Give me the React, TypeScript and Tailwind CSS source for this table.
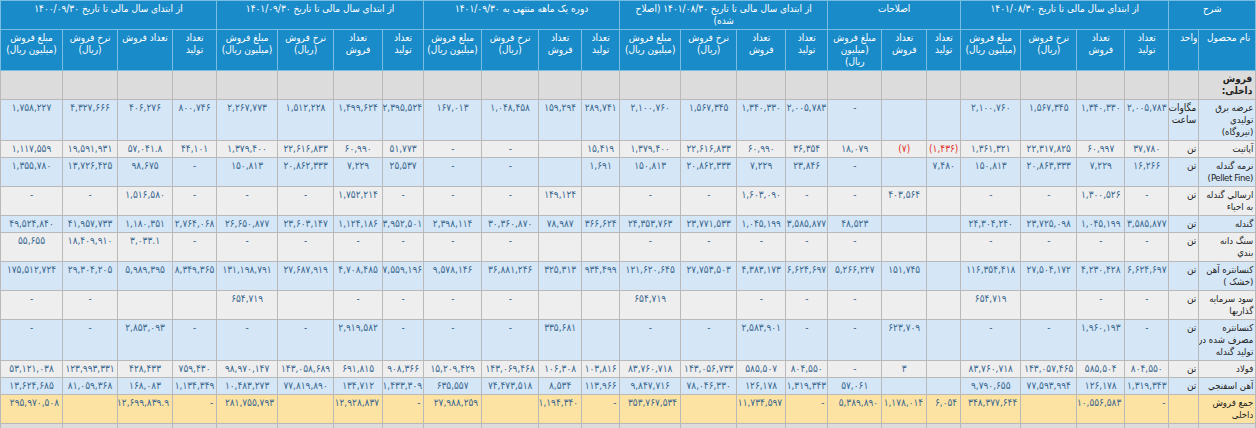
import React from 'react';

const fa = (s: string) => s.replace(/[0-9]/g, (d) => '۰۱۲۳۴۵۶۷۸۹'[Number(d)]);

type Tone = 'blue' | 'gray' | 'yellow' | 'section';

type Row = {
  name: string[];
  unit: string[];
  tone: Tone;
  cells: string[];
};

const toneBg: Record<Tone, string> = {
  blue: 'bg-[#d5e6f6]',
  gray: 'bg-[#eeeeee]',
  yellow: 'bg-[#fde3a3]',
  section: 'bg-[#dcdcdc]',
};

const rows: Row[] = [
  {
    name: ['عرضه برق', 'تولیدی', '(نیروگاه)'],
    unit: ['مگاوات', 'ساعت'],
    tone: 'blue',
    cells: ['2,005,783', '1,340,330', '1,567,345', '2,100,760', '', '', '-', '2,005,783', '1,340,330', '1,567,345', '2,100,760', '289,741', '159,294', '1,048,458', '167,013', '2,395,524', '1,499,624', '1,512,228', '2,267,773', '800,746', '406,276', '4,327,666', '1,758,227'],
  },
  {
    name: ['آپاتیت'],
    unit: ['تن'],
    tone: 'gray',
    cells: ['37,780', '60,997', '22,317,825', '1,361,321', '(1,436)', '(7)', '18,079', '36,354', '60,990', '22,616,833', '1,379,400', '15,419', '', '-', '-', '51,773', '60,990', '22,616,833', '1,379,400', '44,101', '57,041.8', '19,591,931', '1,117,559'],
  },
  {
    name: ['نرمه گندله', '(Pellet Fine)'],
    unit: ['تن'],
    tone: 'blue',
    cells: ['16,266', '7,229', '20,863,333', '150,813', '7,480', '', '-', '23,846', '7,229', '20,862,333', '150,813', '1,691', '', '-', '-', '25,537', '7,229', '20,862,333', '150,813', '-', '98,675', '13,726,425', '1,355,780'],
  },
  {
    name: ['ارسالي گندله', 'به احیاء'],
    unit: ['تن'],
    tone: 'gray',
    cells: ['-', '1,300,526', '-', '-', '', '403,564', '-', '-', '1,603,090', '-', '-', '', '149,124', '-', '-', '-', '1,752,214', '-', '-', '-', '1,516,580', '-', '-'],
  },
  {
    name: ['گندله'],
    unit: ['تن'],
    tone: 'blue',
    cells: ['3,585,877', '1,045,199', '23,725,098', '24,304,240', '', '', '48,523', '3,585,877', '1,045,199', '23,771,533', '24,353,763', '366,624', '78,987', '30,360,870', '2,398,114', '3,952,501', '1,124,186', '23,603,147', '26,650,877', '2,764,068', '1,180,351', '41,957,733', '49,524,840'],
  },
  {
    name: ['سنگ دانه', 'بندي'],
    unit: ['تن'],
    tone: 'gray',
    cells: ['-', '-', '-', '-', '', '', '-', '-', '-', '-', '-', '', '', '-', '-', '-', '-', '-', '-', '-', '3,033.1', '18,409,910', '55,655'],
  },
  {
    name: ['کنسانتره آهن', '(خشک )'],
    unit: ['تن'],
    tone: 'blue',
    cells: ['6,624,697', '4,230,428', '27,504,172', '116,354,418', '', '151,745', '5,266,227', '6,624,697', '4,383,173', '27,753,503', '121,620,645', '934,499', '325,313', '36,881,246', '9,578,146', '7,559,196', '4,708,485', '27,687,919', '131,198,791', '8,349,365', '5,989,395', '29,304,205', '175,512,724'],
  },
  {
    name: ['سود سرمایه', 'گذاریها'],
    unit: ['تن'],
    tone: 'gray',
    cells: ['-', '-', '', '654,719', '', '', '-', '-', '-', '', '654,719', '', '', '-', '-', '-', '-', '', '654,719', '', '', '-', '-'],
  },
  {
    name: ['کنسانتره', 'مصرف شده در', 'تولید گندله'],
    unit: ['تن'],
    tone: 'blue',
    cells: ['-', '1,960,193', '-', '-', '', '623,709', '-', '-', '2,583,901', '-', '-', '', '335,681', '-', '-', '-', '2,919,582', '-', '-', '-', '2,853,093', '-', '-'],
  },
  {
    name: ['فولاد'],
    unit: ['تن'],
    tone: 'gray',
    cells: ['804,550', '585,504', '143,057,465', '83,760,718', '', '3', '-', '804,550', '585,507', '143,056,733', '83,760,718', '103,816', '106,308', '143,069,468', '15,209,429', '908,366', '691,815', '143,058,689', '98,970,147', '759,430', '428,433', '123,993,331', '53,121,038'],
  },
  {
    name: ['آهن اسفنجي'],
    unit: ['تن'],
    tone: 'blue',
    cells: ['1,319,343', '126,178', '77,593,994', '9,790,655', '', '', '57,061', '1,319,343', '126,178', '78,046,330', '9,847,716', '113,966', '8,534', '74,473,518', '635,557', '1,433,309', '134,712', '77,819,890', '10,483,273', '1,134,349', '168,083', '81,059,368', '13,624,685'],
  },
  {
    name: ['جمع فروش', 'داخلی'],
    unit: [],
    tone: 'yellow',
    cells: ['-', '10,556,583', '', '348,377,644', '6,054', '1,178,014', '5,389,890', '-', '11,734,597', '', '353,767,534', '-', '1,194,340', '', '27,988,259', '-', '12,928,837', '', '281,755,793', '-', '12,699,839.9', '', '295,970,508'],
  },
];

const groups = [
  { title: ['از ابتدای سال مالی تا تاریخ 1401/08/30'], span: 4 },
  { title: ['اصلاحات'], span: 3 },
  { title: ['از ابتدای سال مالی تا تاریخ 1401/08/30 (اصلاح', 'شده)'], span: 4 },
  { title: ['دوره یک ماهه منتهی به 1401/09/30'], span: 4 },
  { title: ['از ابتدای سال مالی تا تاریخ 1401/09/30'], span: 4 },
  { title: ['از ابتدای سال مالی تا تاریخ 1400/09/30'], span: 4 },
];

const prod = ['تعداد', 'تولید'];
const sold = ['تعداد', 'فروش'];
const rate = ['نرخ فروش', '(ریال)'];
const amount = ['مبلغ فروش', '(میلیون ریال)'];

const subHeads: string[][] = [
  prod, sold, rate, amount,
  prod, sold, ['مبلغ فروش', '(میلیون', 'ریال)'],
  prod, sold, rate, amount,
  prod, sold, rate, amount,
  prod, sold, rate, amount,
  prod, ['تعداد فروش'], rate, amount,
];

const Lines = ({ lines }: { lines: string[] }) => (
  <>
    {lines.map((l, i) => (
      <React.Fragment key={i}>
        {i > 0 && <br />}
        {fa(l)}
      </React.Fragment>
    ))}
  </>
);

const th = 'border border-[#79bde3] bg-[#1a8bc9] text-white font-normal align-top px-[1px] py-[2px] leading-[12px] whitespace-nowrap overflow-hidden';
const td = 'border border-[#b9b9b9] align-top px-[1px] py-[2px] leading-[12px] whitespace-nowrap overflow-hidden';

export default function App() {
  return (
    <div
      className="w-[1256px] bg-white"
      style={{ fontFamily: 'Tahoma, "DejaVu Sans Condensed", "DejaVu Sans", sans-serif' }}
    >
      <table dir="rtl" className="w-[1256px] table-fixed border-collapse text-[10px]">
        <colgroup>
          <col className="w-[57px]" />
          <col className="w-[30px]" />
          <col className="w-[44px]" />
          <col className="w-[48px]" />
          <col className="w-[56px]" />
          <col className="w-[60px]" />
          <col className="w-[34px]" />
          <col className="w-[45px]" />
          <col className="w-[54px]" />
          <col className="w-[42px]" />
          <col className="w-[49px]" />
          <col className="w-[56px]" />
          <col className="w-[61px]" />
          <col className="w-[38px]" />
          <col className="w-[43px]" />
          <col className="w-[57px]" />
          <col className="w-[58px]" />
          <col className="w-[41px]" />
          <col className="w-[49px]" />
          <col className="w-[56px]" />
          <col className="w-[61px]" />
          <col className="w-[44px]" />
          <col className="w-[55px]" />
          <col className="w-[55px]" />
          <col className="w-[62px]" />
        </colgroup>
        <thead>
          <tr>
            <th colSpan={2} className={`${th} text-center`}>شرح</th>
            {groups.map((g, i) => (
              <th key={i} colSpan={g.span} className={`${th} text-center`}>
                <Lines lines={g.title} />
              </th>
            ))}
          </tr>
          <tr>
            <th className={`${th} text-right pr-[5px]`}>نام محصول</th>
            <th className={`${th} text-right`}>واحد</th>
            {subHeads.map((h, i) => (
              <th key={i} className={`${th} text-center`}>
                <Lines lines={h} />
              </th>
            ))}
          </tr>
        </thead>
        <tbody>
          <tr className={toneBg.section}>
            <td className={`${td} text-right pr-[3px] text-[#222] font-bold`}>
              فروش
              <br />
              داخلی:
            </td>
            {Array.from({ length: 24 }).map((_, i) => (
              <td key={i} className={td} />
            ))}
          </tr>
          {rows.map((r, ri) => (
            <tr key={ri} className={toneBg[r.tone]}>
              <td className={`${td} text-right pr-[2px] text-[9.5px] tracking-[-0.4px] text-[#222]`}>
                <Lines lines={r.name} />
              </td>
              <td className={`${td} text-right pr-[2px] text-[#222]`}>
                <Lines lines={r.unit} />
              </td>
              {r.cells.map((c, ci) => (
                <td
                  key={ci}
                  className={`${td} tracking-[-0.3px] ${r.tone === 'yellow' ? 'text-right pr-[3px]' : 'text-center'} ${
                    c.startsWith('(') ? 'text-[#e0312b]' : 'text-[#3a6890]'
                  }`}
                >
                  {fa(c)}
                </td>
              ))}
            </tr>
          ))}
          <tr className={toneBg.section}>
            <td className={`${td} text-right pr-[3px] text-[#222] font-bold`}>
              فروش
              <br />
              صادراتی:
            </td>
            {Array.from({ length: 24 }).map((_, i) => (
              <td key={i} className={td} />
            ))}
          </tr>
        </tbody>
      </table>
    </div>
  );
}
